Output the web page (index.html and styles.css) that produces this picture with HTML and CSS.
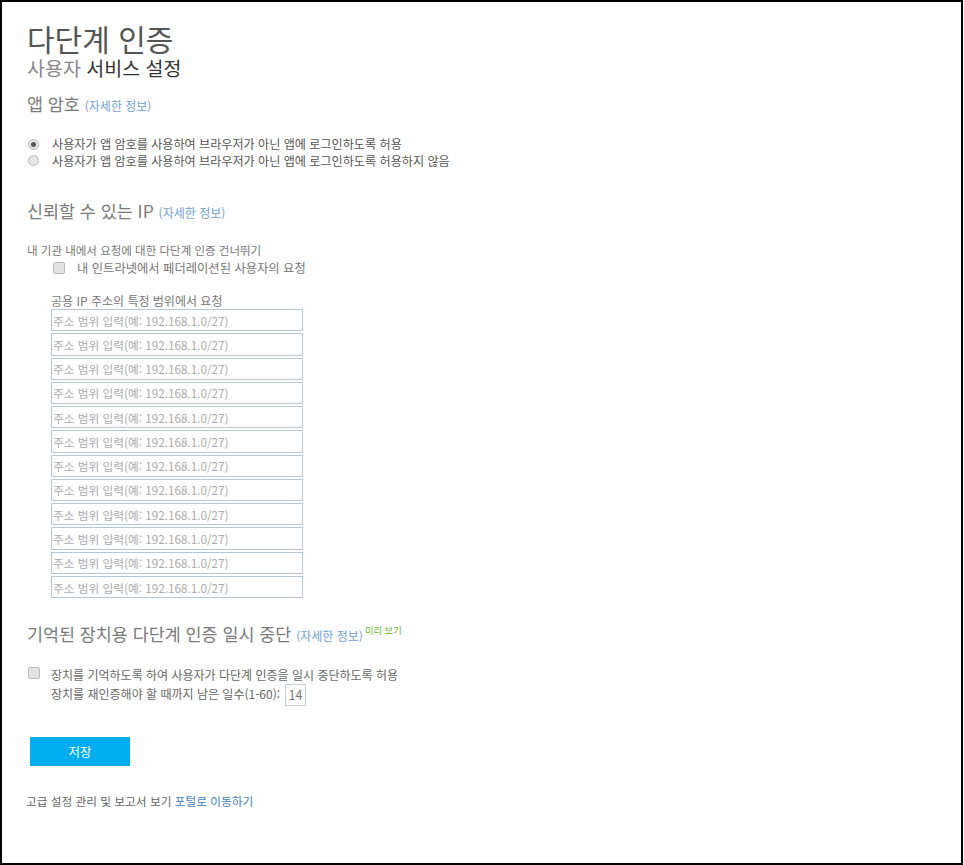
FILE: index.html
```html
<!DOCTYPE html>
<html lang="ko">
<head>
<meta charset="utf-8">
<title>다단계 인증</title>
<link rel="stylesheet" href="styles.css">
</head>
<body>
<div class="frame">
  <h1 class="title">다단계 인증</h1>
  <div class="subtitle"><span class="sub-muted">사용자</span> <span class="sub-strong">서비스 설정</span></div>

  <section class="section">
    <h2 class="heading">앱 암호 <a class="more" href="#">(자세한 정보)</a></h2>
    <div class="radios">
      <label class="radio-row"><input type="radio" name="app" class="radio" checked> 사용자가 앱 암호를 사용하여 브라우저가 아닌 앱에 로그인하도록 허용</label>
      <label class="radio-row"><input type="radio" name="app" class="radio"> 사용자가 앱 암호를 사용하여 브라우저가 아닌 앱에 로그인하도록 허용하지 않음</label>
    </div>
  </section>

  <section class="section ip">
    <h2 class="heading">신뢰할 수 있는 IP <a class="more" href="#">(자세한 정보)</a></h2>
    <p class="label skip-label">내 기관 내에서 요청에 대한 다단계 인증 건너뛰기</p>
    <label class="check-row fed"><input type="checkbox" class="check"> 내 인트라넷에서 페더레이션된 사용자의 요청</label>
    <p class="label range-label">공용 IP 주소의 특정 범위에서 요청</p>
    <div class="ranges">
      <input class="range" type="text" placeholder="주소 범위 입력(예: 192.168.1.0/27)">
      <input class="range" type="text" placeholder="주소 범위 입력(예: 192.168.1.0/27)">
      <input class="range" type="text" placeholder="주소 범위 입력(예: 192.168.1.0/27)">
      <input class="range" type="text" placeholder="주소 범위 입력(예: 192.168.1.0/27)">
      <input class="range" type="text" placeholder="주소 범위 입력(예: 192.168.1.0/27)">
      <input class="range" type="text" placeholder="주소 범위 입력(예: 192.168.1.0/27)">
      <input class="range" type="text" placeholder="주소 범위 입력(예: 192.168.1.0/27)">
      <input class="range" type="text" placeholder="주소 범위 입력(예: 192.168.1.0/27)">
      <input class="range" type="text" placeholder="주소 범위 입력(예: 192.168.1.0/27)">
      <input class="range" type="text" placeholder="주소 범위 입력(예: 192.168.1.0/27)">
      <input class="range" type="text" placeholder="주소 범위 입력(예: 192.168.1.0/27)">
      <input class="range" type="text" placeholder="주소 범위 입력(예: 192.168.1.0/27)">
    </div>
  </section>

  <section class="section remember">
    <h2 class="heading">기억된 장치용 다단계 인증 일시 중단 <a class="more" href="#">(자세한 정보)</a><sup class="preview">미리 보기</sup></h2>
    <div class="remember-block">
      <input type="checkbox" class="check">
      <div class="remember-text">
        <div class="line">장치를 기억하도록 하여 사용자가 다단계 인증을 일시 중단하도록 허용</div>
        <div class="line days">장치를 재인증해야 할 때까지 남은 일수(1-60): <input class="days-input" type="text" value="14"></div>
      </div>
    </div>
  </section>

  <button class="save" type="button">저장</button>

  <p class="footer">고급 설정 관리 및 보고서 보기 <a class="portal" href="#">포털로 이동하기</a></p>
</div>
</body>
</html>
```
FILE: styles.css
```css
html, body {
  margin: 0;
  padding: 0;
  background: #fff;
}
body {
  font-family: "Noto Sans CJK KR", "Noto Sans", sans-serif;
  color: #666;
}
.frame {
  box-sizing: border-box;
  width: 963px;
  height: 865px;
  border: 2px solid #000;
  padding: 22px 0 0 25px;
}
.title {
  margin: 0;
  font-family: "Liberation Sans", "Noto Sans CJK KR", sans-serif;
  font-size: 30px;
  font-weight: 400;
  line-height: 34px;
  color: #555;
}
.subtitle {
  font-family: "Liberation Sans", "Noto Sans CJK KR", sans-serif;
  font-size: 19.5px;
  line-height: 22px;
}
.sub-muted { color: #888; }
.sub-strong { color: #333; }

.section { margin: 0; }
.heading {
  margin: 12px 0 0;
  font-size: 17.4px;
  font-weight: 400;
  line-height: 24px;
  color: #7a7a7a;
}
.more {
  font-size: 12px;
  color: #6f9fd3;
  text-decoration: none;
}
.preview {
  font-size: 9.3px;
  line-height: 0;
  color: #74b72d;
  margin-left: 2px;
  vertical-align: 7px;
}

.radios {
  margin-top: 18px;
  display: flex;
  flex-direction: column;
}
.radio-row {
  display: flex;
  align-items: center;
  font-size: 12.1px;
  line-height: 16.5px;
  color: #555;
  gap: 13px;
}
.radio {
  appearance: none;
  -webkit-appearance: none;
  box-sizing: border-box;
  width: 11px;
  height: 11px;
  margin: 0 0 0 1px;
  border: 1px solid #b9b9b9;
  border-radius: 50%;
  background: #e6e6e6;
  position: relative;
  flex: none;
}
.radio:checked::after {
  content: "";
  position: absolute;
  left: 2px;
  top: 2px;
  width: 5px;
  height: 5px;
  border-radius: 50%;
  background: #555;
}

.ip .heading { margin-top: 30px; }
.label {
  margin: 0;
  font-size: 11.5px;
  line-height: 18px;
  color: #777;
}
.skip-label { margin-top: 16px; }
.check-row {
  display: flex;
  align-items: center;
  gap: 12px;
  font-size: 12.3px;
  line-height: 18px;
  color: #777;
}
.fed { margin-left: 26px; }
.check {
  appearance: none;
  -webkit-appearance: none;
  box-sizing: border-box;
  width: 12px;
  height: 12px;
  margin: 0;
  border: 1px solid #bbb;
  border-radius: 2px;
  background: #e2e2e2;
  flex: none;
}
.range-label {
  margin-top: 16px;
  margin-left: 24px;
  font-size: 12px;
  line-height: 16px;
}
.ranges {
  margin-left: 24px;
  display: flex;
  flex-direction: column;
  gap: 2px;
  width: 252px;
}
.range {
  box-sizing: border-box;
  width: 252px;
  height: 22.27px;
  margin: 0;
  border: 1px solid #b6c7d6;
  padding: 0 1px;
  font-size: 11.7px;
  font-family: "Noto Sans CJK KR", sans-serif;
  color: #555;
  outline: none;
}
.range::placeholder { color: #ababab; }

.remember .heading { margin-top: 24px; }
.remember-block {
  margin: 18px 0 0 1px;
  display: flex;
  align-items: flex-start;
  gap: 11px;
}
.remember-block .check { margin-top: 1px; }
.remember-text {
  font-size: 12px;
  line-height: 18.5px;
  color: #666;
}
.days {
  display: flex;
  align-items: center;
  height: 18.5px;
  gap: 5px;
}
.days-input {
  box-sizing: border-box;
  flex: none;
  width: 21px;
  height: 22px;
  margin-top: 2px;
  border: 1px solid #c5cfd8;
  padding: 0;
  text-align: center;
  font-size: 12.5px;
  color: #777;
  font-family: "Noto Sans CJK KR", sans-serif;
}

.save {
  display: block;
  margin: 34px 0 0 3px;
  width: 100px;
  height: 29px;
  border: 0;
  background: #00adee;
  color: #fff;
  font-size: 12.5px;
  font-family: "Noto Sans CJK KR", sans-serif;
}
.footer {
  margin: 27px 0 0 -1px;
  font-size: 11.7px;
  line-height: 16px;
  color: #666;
}
.portal {
  color: #4282c0;
  text-decoration: none;
}
```
